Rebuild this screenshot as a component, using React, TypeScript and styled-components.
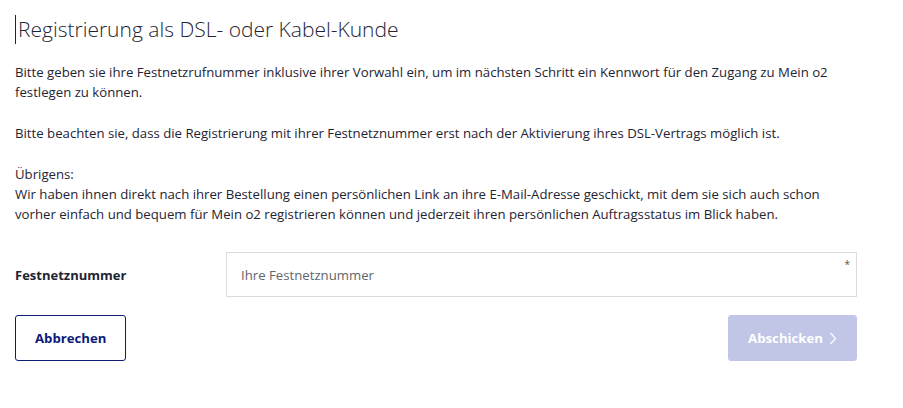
import styled, { createGlobalStyle } from "styled-components";

const GlobalStyle = createGlobalStyle`
    body {
        margin: 0;
        background: #ffffff;
        font-family: "Open Sans", "Noto Sans", sans-serif;
        color: #1f2433;
    }
`;

function App() {
    return (
        <>
            <GlobalStyle/>
            <Page>
                <Title>Registrierung als DSL- oder Kabel-Kunde</Title>
                <Text>
                    Bitte geben sie ihre Festnetzrufnummer inklusive ihrer Vorwahl ein, um im nächsten Schritt ein Kennwort für den Zugang zu Mein o2 festlegen zu können.
                </Text>
                <Text>
                    Bitte beachten sie, dass die Registrierung mit ihrer Festnetznummer erst nach der Aktivierung ihres DSL-Vertrags möglich ist.
                </Text>
                <Text>
                    Übrigens:<br/>
                    Wir haben ihnen direkt nach ihrer Bestellung einen persönlichen Link an ihre E-Mail-Adresse geschickt, mit dem sie sich auch schon vorher einfach und bequem für Mein o2 registrieren können und jederzeit ihren persönlichen Auftragsstatus im Blick haben.
                </Text>
                <FormRow>
                    <Label htmlFor="festnetz">Festnetznummer</Label>
                    <InputWrap>
                        <Input id="festnetz" placeholder="Ihre Festnetznummer"/>
                        <Required>*</Required>
                    </InputWrap>
                </FormRow>
                <Actions>
                    <Button variant="outline">Abbrechen</Button>
                    <Button variant="disabled">
                        Abschicken
                        <svg width="8" height="13" viewBox="0 0 8 13" fill="none">
                            <path d="M1.5 1 L6.5 6.5 L1.5 12" stroke="currentColor" strokeWidth="1.2"/>
                        </svg>
                    </Button>
                </Actions>
            </Page>
        </>
    )
}

const Page = styled.div`
    width: 842px;
    padding: 15px 0 0 15px;
`

const Title = styled.h1`
    margin: 0 0 18px 0;
    padding-left: 2px;
    border-left: 1px solid #1f2433;
    font-size: 21px;
    font-weight: 300;
    line-height: 29px;
    color: #1f2433;
`

const Text = styled.p`
    margin: 0 0 21px 0;
    font-size: 13.2px;
    line-height: 20px;
`

const FormRow = styled.div`
    display: grid;
    grid-template-columns: 211px 1fr;
    align-items: center;
    margin-top: 28px;
`

const Label = styled.label`
    font-size: 13px;
    font-weight: 700;
`

const InputWrap = styled.div`
    position: relative;
`

const Input = styled.input`
    box-sizing: border-box;
    width: 100%;
    height: 45px;
    border: 1px solid #dcdcdc;
    padding: 0 14px;
    font-family: inherit;
    font-size: 13.2px;
    color: #1f2433;
    outline: none;

    &::placeholder {
        color: #62656c;
    }
`

const Required = styled.span`
    position: absolute;
    top: 5px;
    right: 7px;
    font-size: 10px;
    color: #555;
`

const Actions = styled.div`
    display: flex;
    justify-content: space-between;
    margin-top: 18px;
`

const Button = styled.button<{ variant: "outline" | "disabled" }>`
    display: flex;
    align-items: center;
    gap: 6px;
    height: 46px;
    padding: 0 19px;
    border-radius: 3px;
    font-family: inherit;
    font-size: 13.2px;
    font-weight: 700;
    border: 1px solid ${p => p.variant === "outline" ? "#0b1f6e" : "#c1c6e7"};
    background: ${p => p.variant === "outline" ? "#ffffff" : "#c1c6e7"};
    color: ${p => p.variant === "outline" ? "#0c1a7a" : "#ffffff"};
    cursor: ${p => p.variant === "outline" ? "pointer" : "default"};
`

export default App;
